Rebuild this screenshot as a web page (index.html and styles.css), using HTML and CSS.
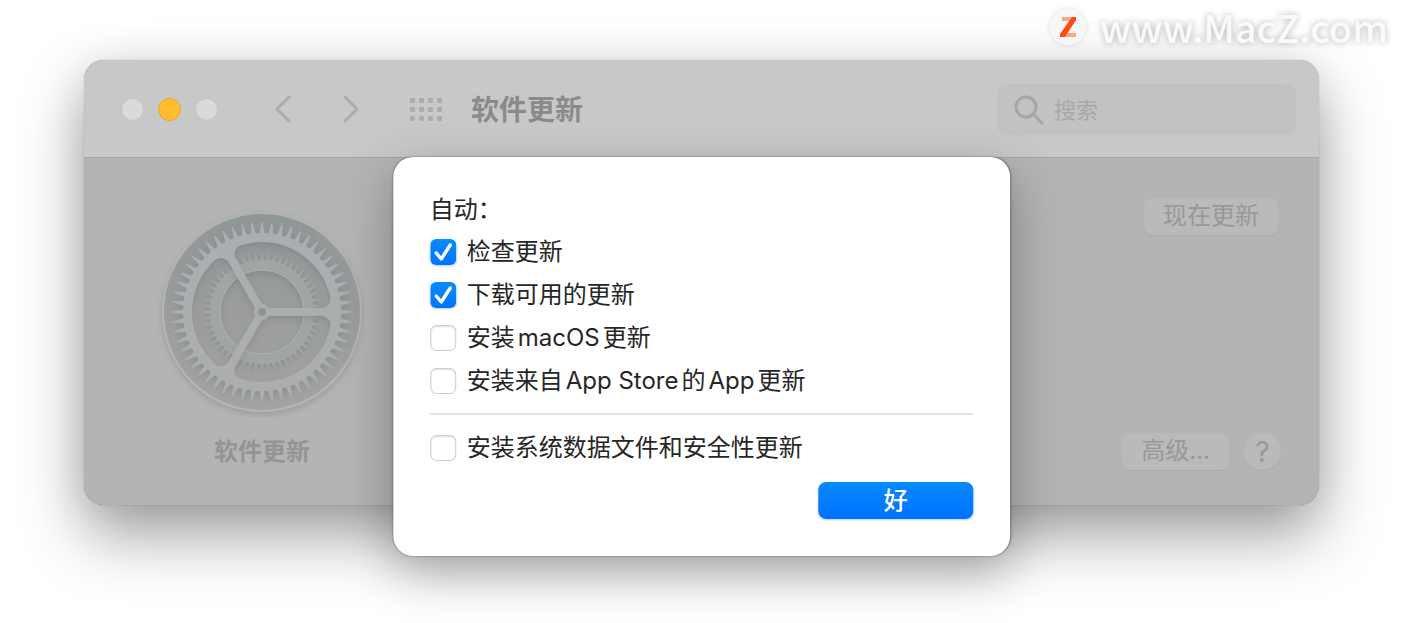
FILE: index.html
```
<!DOCTYPE html>
<html lang="zh-CN">
<head>
  <meta charset="UTF-8">
  <meta name="viewport" content="width=device-width, initial-scale=1.0">
  <title>软件更新</title>
  <link rel="stylesheet" href="styles.css">
</head>
<body>
<a class="site-mark" href="#">
  <svg class="site-logo" viewBox="0 0 36 36" aria-hidden="true">
    <circle cx="18" cy="18" r="18" fill="#f7f7f7"/>
    <path d="M12 8h14v4H12zM12 24h14v4H12z" fill="#ffa488"/>
    <path d="M22 8h4v3L15 28h-5v-3z" fill="#ff4a12"/>
  </svg>
  <span>www.MacZ.com</span>
</a>

<main class="window">
  <header class="toolbar">
    <div class="lights">
      <button type="button" class="light" aria-label="关闭"></button>
      <button type="button" class="light minimize" aria-label="最小化"></button>
      <button type="button" class="light" aria-label="缩放"></button>
    </div>
    <nav class="nav">
      <button type="button" class="icon-button" aria-label="后退">
        <svg width="18" height="28" viewBox="0 0 18 28"><path d="M15 1L3 13l12 12"/></svg>
      </button>
      <button type="button" class="icon-button" aria-label="前进">
        <svg width="18" height="28" viewBox="0 0 18 28"><path d="M3 1l12 12L3 25"/></svg>
      </button>
    </nav>
    <button type="button" class="icon-button" aria-label="显示全部">
      <svg class="grid-icon" width="33" height="24" viewBox="0 0 33 24">
        <g id="dots">
          <rect width="5" height="5" rx="1"/>
          <rect x="9" width="5" height="5" rx="1"/>
          <rect x="18" width="5" height="5" rx="1"/>
          <rect x="27" width="5" height="5" rx="1"/>
        </g>
        <use href="#dots" y="9"/>
        <use href="#dots" y="18"/>
      </svg>
    </button>
    <h1>软件更新</h1>
    <label class="search">
      <svg width="32" height="32" viewBox="0 0 32 32" aria-hidden="true"><circle cx="13" cy="13" r="10"/><path d="M21 21l8 8"/></svg>
      <input type="search" placeholder="搜索" aria-label="搜索">
    </label>
  </header>

  <div class="pane">
    <div class="pane-icon">
      <svg class="gear" viewBox="-105 -105 210 210" aria-hidden="true">
        <defs>
          <linearGradient id="well" x1="0" y1="0" x2="0" y2="1">
            <stop offset="0" stop-color="#919696"/>
            <stop offset=".5" stop-color="#9b9d9d"/>
            <stop offset="1" stop-color="#a4a4a4"/>
          </linearGradient>
          <linearGradient id="metal" gradientUnits="userSpaceOnUse" x1="0" y1="-90" x2="0" y2="90">
            <stop offset="0" stop-color="#a9afb1"/>
            <stop offset="1" stop-color="#adadad"/>
          </linearGradient>
          <linearGradient id="rim" x1="0" y1="0" x2="0" y2="1">
            <stop offset="0" stop-color="#adb3b5"/>
            <stop offset="1" stop-color="#b5b5b5"/>
          </linearGradient>
          <filter id="drop" x="-20%" y="-20%" width="140%" height="140%">
            <feDropShadow dx="0" dy="3" stdDeviation="3" flood-color="#666" flood-opacity=".3"/>
          </filter>
          <path id="tooth" d="M-3 -77L-2.200 -80L-.5 -90H.5L2.200 -80L3 -77z"/>
          <g id="teeth7">
            <use href="#tooth"/>
            <use href="#tooth" transform="rotate(6.4286)"/>
            <use href="#tooth" transform="rotate(12.8571)"/>
            <use href="#tooth" transform="rotate(19.2857)"/>
            <use href="#tooth" transform="rotate(25.7143)"/>
            <use href="#tooth" transform="rotate(32.1429)"/>
            <use href="#tooth" transform="rotate(38.5714)"/>
          </g>
          <g id="teeth">
            <use href="#teeth7"/>
            <use href="#teeth7" transform="rotate(45)"/>
            <use href="#teeth7" transform="rotate(90)"/>
            <use href="#teeth7" transform="rotate(135)"/>
            <use href="#teeth7" transform="rotate(180)"/>
            <use href="#teeth7" transform="rotate(225)"/>
            <use href="#teeth7" transform="rotate(270)"/>
            <use href="#teeth7" transform="rotate(315)"/>
          </g>
          <path id="slot" d="M7.500 13H59.600A61 61 0 0 1 -18.500 58.100z" stroke-width="18" stroke-linejoin="round"/>
          <mask id="spokes" maskUnits="userSpaceOnUse" x="-100" y="-100" width="200" height="200">
            <rect x="-100" y="-100" width="200" height="200" fill="#fff"/>
            <g fill="#000" stroke="#000">
              <use href="#slot"/>
              <use href="#slot" transform="rotate(120)"/>
              <use href="#slot" transform="rotate(240)"/>
            </g>
            <circle r="8" fill="#fff"/>
            <circle r="4" fill="#000"/>
          </mask>
        </defs>
        <circle r="100" fill="url(#rim)" filter="url(#drop)"/>
        <circle r="98" fill="url(#well)"/>
        <!-- small gear behind -->
        <g fill="#a2a5a6" filter="url(#drop)">
          <use href="#teeth" transform="scale(.655)"/>
          <circle r="47" fill="none" stroke="#a2a5a6" stroke-width="10"/>
          <circle r="42" fill="none" stroke="#afb2b3"/>
        </g>
        <!-- big gear with three spokes -->
        <g filter="url(#drop)">
          <g fill="url(#metal)" mask="url(#spokes)">
            <circle r="79"/>
            <use href="#teeth"/>
          </g>
        </g>
      </svg>
      <p>软件更新</p>
    </div>
    <div class="pane-actions">
      <button type="button" class="push update">现在更新</button>
      <div class="bottom-actions">
        <button type="button" class="push">高级...</button>
        <button type="button" class="help" aria-label="帮助">?</button>
      </div>
    </div>
  </div>

  <form class="sheet" role="dialog" aria-labelledby="sheetTitle">
    <h2 id="sheetTitle">自动：</h2>
    <label class="option"><input type="checkbox" name="check" checked>检查更新</label>
    <label class="option"><input type="checkbox" name="download" checked>下载可用的更新</label>
    <label class="option"><input type="checkbox" name="macos"><span>安装<span class="latin">macOS</span>更新</span></label>
    <label class="option"><input type="checkbox" name="apps"><span>安装来自<span class="latin">App Store</span>的<span class="latin">App</span>更新</span></label>
    <hr>
    <label class="option"><input type="checkbox" name="security">安装系统数据文件和安全性更新</label>
    <button type="submit" class="ok">好</button>
  </form>
</main>
</body>
</html>
```

FILE: styles.css
```
* {
  box-sizing: border-box;
}
body {
  margin: 0;
  padding: 60px 87px 118px 84px;
  background: #fff;
  font-family: Inter, "Noto Sans CJK SC", sans-serif;
  font-size: 24px;
  color: #262626;
  overflow: hidden;
}
button, input {
  font: inherit;
}
button {
  padding: 0;
  border: none;
}
h1, h2, p {
  margin: 0;
}

.site-mark {
  position: absolute;
  top: 3px;
  right: 18px;
  z-index: 2;
  display: flex;
  align-items: center;
  gap: 14px;
  font-family: "Noto Sans CJK SC", sans-serif;
  font-size: 38px;
  font-weight: 500;
  line-height: 48px;
  color: #fafafa;
  text-decoration: none;
  text-shadow: 0 0 7px rgba(0, 0, 0, 0.3);
}
.site-logo {
  width: 36px;
  height: 36px;
  border-radius: 50%;
  box-shadow: 0 0 5px rgba(0, 0, 0, 0.15);
}

.window {
  position: relative;
  border-radius: 20px;
  background: #b4b4b4;
  box-shadow: 0 0 1px rgba(0, 0, 0, 0.4), 0 0 40px rgba(0, 0, 0, 0.08), 0 30px 64px rgba(0, 0, 0, 0.38);
}
.toolbar {
  display: flex;
  align-items: center;
  height: 98px;
  padding: 2px 23px 0 37px;
  border-bottom: 1px solid #a6a6a6;
  border-radius: 20px 20px 0 0;
  background: #c8c8c8;
}
.lights {
  display: flex;
  gap: 14px;
}
.light {
  width: 23px;
  height: 23px;
  border: 1px solid #c3c3c5;
  border-radius: 50%;
  background: #dadadc;
}
.minimize {
  border-color: #e8a42c;
  background: #ffbd2e;
}
.nav {
  display: flex;
  gap: 50px;
  margin: 0 50px 0 56px;
}
.icon-button {
  display: flex;
  background: none;
}
.icon-button path, .search svg {
  fill: none;
  stroke: #acacac;
  stroke-width: 3;
  stroke-linecap: round;
  stroke-linejoin: round;
}
.grid-icon {
  fill: #acacac;
}
h1 {
  margin-left: 28px;
  font-size: 28px;
  font-weight: 700;
  line-height: 40px;
  color: #8a8a8a;
}
.search {
  display: flex;
  align-items: center;
  gap: 9px;
  width: 299px;
  height: 51px;
  margin-left: auto;
  padding: 0 16px;
  border-radius: 10px;
  background: #c2c2c2;
}
.search svg {
  flex: none;
  stroke: #a6a6a6;
}
.search input {
  width: 100%;
  padding: 0;
  border: none;
  outline: none;
  background: none;
  font-size: 22px;
}
.search input::placeholder {
  color: #a8a8a8;
}

.pane {
  display: flex;
  justify-content: space-between;
  padding: 40px 38px 35px 73px;
}
.pane-icon {
  text-align: center;
  font-weight: 700;
  line-height: 36px;
  color: #949494;
}
.gear {
  display: block;
  width: 210px;
  height: 210px;
  margin: 9px 0 17px;
}
.pane-actions {
  display: flex;
  flex-direction: column;
  justify-content: space-between;
  align-items: flex-end;
}
.bottom-actions {
  display: flex;
  gap: 15px;
}
.push, .help {
  height: 37px;
  border-radius: 8px;
  background: #bababa;
  box-shadow: 0 1px 1px rgba(0, 0, 0, 0.06);
  line-height: 34px;
  color: #989898;
}
.push {
  padding: 0 19px 2px;
}
.update {
  margin-right: 3px;
}
.help {
  width: 37px;
  border-radius: 50%;
  font-size: 28px;
}

/* modal sheet, hangs from the toolbar */
.sheet {
  position: absolute;
  top: 97px;
  left: 50%;
  transform: translateX(-50%);
  display: flex;
  flex-direction: column;
  width: 50%;
  padding: 33px 37px 37px;
  border-radius: 20px;
  background: #fff;
  box-shadow: 0 0 2px rgba(0, 0, 0, 0.5), 0 18px 50px rgba(0, 0, 0, 0.3);
}
.sheet h2 {
  font-size: 24px;
  font-weight: 400;
  line-height: 40px;
}
.option {
  display: flex;
  align-items: center;
  gap: 11px;
  line-height: 43px;
}
.option input {
  flex: none;
  appearance: none;
  width: 26px;
  height: 26px;
  margin: 0;
  border: 1px solid #cdcdcd;
  border-radius: 6px;
  background: #fff;
  box-shadow: inset 0 1px 2px rgba(0, 0, 0, 0.14);
}
.option input:checked {
  border: none;
  background: url("data:image/svg+xml,%3Csvg xmlns='http://www.w3.org/2000/svg' viewBox='0 0 26 26'%3E%3Cpath d='M6 14l5 6L20 6' fill='none' stroke='white' stroke-width='3.4' stroke-linecap='round' stroke-linejoin='round'/%3E%3C/svg%3E"), linear-gradient(#0a8cff, #0074ff);
  box-shadow: 0 1px 2px rgba(0, 110, 255, 0.3);
}
.latin {
  margin: 0 3px;
}
hr {
  width: 100%;
  height: 2px;
  margin: 11px 0;
  border: none;
  background: #e3e3e3;
}
.ok {
  align-self: flex-end;
  width: 155px;
  height: 37px;
  margin-top: 13px;
  border-radius: 8px;
  background: linear-gradient(#058aff, #0071ff);
  box-shadow: 0 1px 2px rgba(0, 110, 255, 0.3);
  font-weight: 500;
  line-height: 34px;
  color: #fff;
}
```
